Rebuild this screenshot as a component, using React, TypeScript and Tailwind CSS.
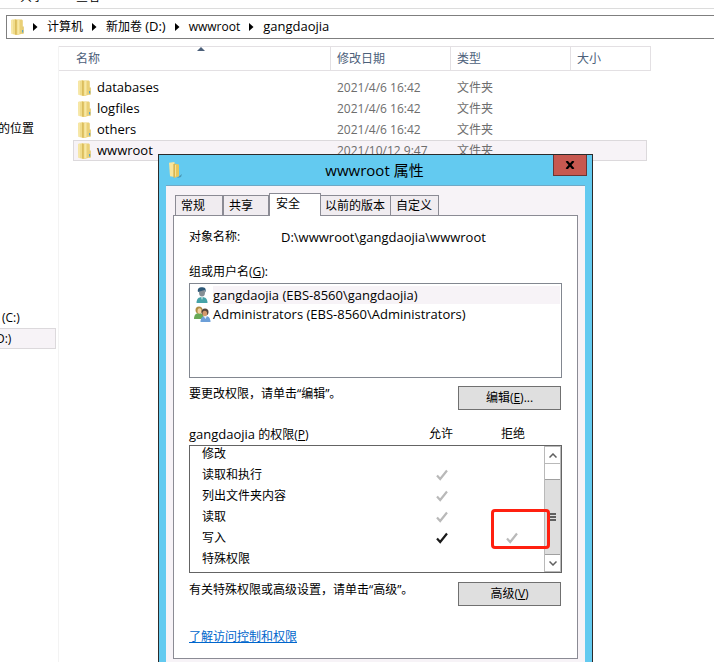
import type { ReactNode } from 'react';

const files = [
  { name: 'databases', date: '2021/4/6 16:42' },
  { name: 'logfiles', date: '2021/4/6 16:42' },
  { name: 'others', date: '2021/4/6 16:42' },
  { name: 'wwwroot', date: '2021/10/12 9:47', selected: true },
];

const permissions: { label: string; allow?: string; deny?: string }[] = [
  { label: '修改' },
  { label: '读取和执行', allow: 'text-[#b9b9b9]' },
  { label: '列出文件夹内容', allow: 'text-[#b9b9b9]' },
  { label: '读取', allow: 'text-[#b9b9b9]' },
  { label: '写入', allow: 'text-[#1a1a1a]', deny: 'text-[#b9b9b9]' },
  { label: '特殊权限' },
];

function FolderIcon() {
  return (
    <svg width="16" height="16" viewBox="0 0 16 16" className="shrink-0" aria-hidden="true">
      <path d="M1 1 6 0v16l-4.500-1.200z" fill="#f0dc8c" />
      <path d="M1 1 3 .6v14.600l-1.500-.4z" fill="#f7e7a6" />
      <path d="M5.500.500H12l.8 1v13l-5.300 1.500H5.500z" fill="#ead077" />
      <path d="M7.300 1.200 9.500.6v14.200l-2.200.9z" fill="#f8e8a4" />
      <path d="M5.200.800h1.300v14.700H5.200z" fill="#d6b755" />
      <path d="M12.300 7.500h1.500v7l-1.500.4z" fill="#e2c768" />
      <path d="M12 11h1.200v2.500H12z" fill="#5aa7c8" />
    </svg>
  );
}

function TitleFolderIcon() {
  return (
    <svg width="16" height="16" viewBox="0 0 16 16" className="shrink-0" aria-hidden="true">
      <path d="m10 15 4-3-1 3-4 1z" fill="#4a97b5" />
      <path d="M1 .8 6.500 0v15L2 14.200z" fill="#f8e59c" />
      <path d="m6 1.500 5 1v11.800L6 16z" fill="#e7c65c" />
      <path d="M6 2v13.500" stroke="#c9a545" strokeWidth="1" />
      <path d="M7.500 3v11.500" stroke="#f6e196" strokeWidth="1" />
    </svg>
  );
}

function UserIcon() {
  return (
    <svg width="16" height="16" viewBox="0 0 16 16" className="shrink-0" aria-hidden="true">
      <path d="M2.500 16c0-4 2-6 5.500-6s5.500 2 5.500 6z" fill="#46a3a8" />
      <path d="m6.500 10 1.500 3 1.500-3z" fill="#a9d6d8" />
      <ellipse cx="8" cy="5.500" rx="3" ry="4" fill="#858f95" />
      <path d="M4 5C3 1 6 0 8.500.3 12 .5 12 3 11.500 5.500L10.500 3z" fill="#2d5877" />
    </svg>
  );
}

function GroupIcon() {
  return (
    <svg width="17" height="16" viewBox="0 0 17 16" className="shrink-0" aria-hidden="true">
      <path d="M0 13c0-4 2-6 5-6s5 2 5 6z" fill="#69a956" />
      <circle cx="5" cy="4" r="3.500" fill="#b08d42" />
      <ellipse cx="5.500" cy="5" rx="2" ry="2.800" fill="#f0d0a0" />
      <path d="M6.500 16c0-4 2-6 5-6s5 2 5 6z" fill="#6c9fd8" />
      <path d="m9.500 10 2 3 1.500-3z" fill="#e7f1fb" />
      <circle cx="11" cy="6" r="3.500" fill="#54443a" />
      <ellipse cx="10.800" cy="7.500" rx="2.300" ry="2.800" fill="#d49a6c" />
    </svg>
  );
}

function Check({ className }: { className: string }) {
  return (
    <svg width="12" height="12" viewBox="0 0 12 12" className={className} role="img" aria-label="✓">
      <path d="M1 6.500 4.200 10 11 1.500" fill="none" stroke="currentColor" strokeWidth="2.200" />
    </svg>
  );
}

function CrumbArrow() {
  return (
    <svg width="5" height="8" viewBox="0 0 5 8" aria-hidden="true">
      <path d="m0 0 4.500 4L0 8z" fill="#000" />
    </svg>
  );
}

function En({ children }: { children: ReactNode }) {
  return <span className="text-[13px]">{children}</span>;
}

function Breadcrumb() {
  const crumb = 'flex items-center gap-[9px]';
  return (
    <nav className="ml-1.5 mt-1.5 flex h-6 items-center border border-r-0 border-[#7f7f7f] pl-[3px]">
      <FolderIcon />
      <ol className="ml-[7px] flex items-center gap-[9px]">
        <li className={crumb}><CrumbArrow /><a href="#computer">计算机</a></li>
        <li className={crumb}><CrumbArrow /><a href="#d">新加卷 <En>(D:)</En></a></li>
        <li className={crumb}><CrumbArrow /><a href="#wwwroot">wwwroot</a></li>
        <li className={crumb}><CrumbArrow /><a href="#gangdaojia"><En>gangdaojia</En></a></li>
      </ol>
    </nav>
  );
}

function FileList() {
  return (
    <main className="min-w-0 flex-1 border-l border-[#f3f3f3]">
      <table className="w-[592px] table-fixed border-separate border-spacing-0 text-left">
        <colgroup>
          <col className="w-[272px]" />
          <col className="w-[120px]" />
          <col className="w-[120px]" />
          <col className="w-[80px]" />
        </colgroup>
        <thead className="text-[#4c607a]">
          <tr className="h-[25px]">
            <th className="relative border-y border-r border-[#e3e0e3] pl-[17px] font-normal">
              名称
              <svg width="8" height="4" viewBox="0 0 8 4" className="absolute left-[138px] top-0" aria-hidden="true">
                <path d="M4 0 8 4H0z" fill="#4c607a" />
              </svg>
            </th>
            <th className="border-y border-r border-[#e3e0e3] pl-1.5 font-normal">修改日期</th>
            <th className="border-y border-r border-[#e3e0e3] pl-1.5 font-normal">类型</th>
            <th className="border-y border-r border-[#e3e0e3] pl-1.5 font-normal">大小</th>
          </tr>
        </thead>
      </table>
      <table className="ml-3.5 mt-1.5 w-[574px] table-fixed border-separate border-spacing-0">
        <colgroup>
          <col className="w-[258px]" />
          <col className="w-[120px]" />
          <col />
        </colgroup>
        <tbody>
          {files.map((f) => {
            const cell = f.selected ? 'border-y border-[#dcd9dc] bg-[#f7f3f7]' : '';
            return (
              <tr key={f.name} className="h-[21px] leading-[19px]">
                <td className={`p-0 ${cell} ${f.selected ? 'border-l pl-[3px]' : 'pl-1'}`}>
                  <span className="flex items-center gap-1"><FolderIcon /><En>{f.name}</En></span>
                </td>
                <td className={`p-0 pl-1.5 text-[#6d6d6d] ${cell}`}>{f.date}</td>
                <td className={`p-0 pl-1.5 text-[#6d6d6d] ${cell} ${f.selected ? 'border-r' : ''}`}>文件夹</td>
              </tr>
            );
          })}
        </tbody>
      </table>
    </main>
  );
}

function DialogButton({ children }: { children: ReactNode }) {
  return (
    <button type="button" className="mr-px h-6 w-[103px] border border-[#707070] bg-[#dfdfdf]">
      {children}
    </button>
  );
}

function Tabs() {
  const tab = 'h-5 border border-b-0 border-[#8b8b94] bg-[#f0ecf0] text-left';
  return (
    <div role="tablist" className="relative flex items-end pl-0.5">
      <button type="button" role="tab" className={`${tab} w-12 pl-[5px]`}>常规</button>
      <button type="button" role="tab" className={`${tab} w-[46px] pl-[5px]`}>共享</button>
      <button type="button" role="tab" aria-selected="true" className="-mb-px h-[23px] w-[52px] border border-b-0 border-[#8b8b94] bg-white pb-0.5 pl-1.5 text-left">
        安全
      </button>
      <button type="button" role="tab" className={`${tab} w-[70px] border-l-0 pl-1`}>以前的版本</button>
      <button type="button" role="tab" className={`${tab} w-12 border-l-0 pl-[5px]`}>自定义</button>
    </div>
  );
}

function PermissionList() {
  return (
    <div className="flex h-32 border border-[#646464]">
      <div className="flex-1">
        <table className="mt-[-3px] w-full table-fixed">
          <colgroup>
            <col />
            <col className="w-[70px]" />
            <col className="w-12" />
          </colgroup>
          <tbody>
            {permissions.map((p) => (
              <tr key={p.label} className="h-[21px]">
                <td className="p-0 pl-3">{p.label}</td>
                <td className="p-0 pl-2.5">{p.allow && <Check className={p.allow} />}</td>
                <td className="p-0 pl-2.5">{p.deny && <Check className={p.deny} />}</td>
              </tr>
            ))}
          </tbody>
        </table>
      </div>
      <div className="flex w-[17px] flex-col border border-[#b9b9b9] bg-white">
        <button type="button" aria-label="▲" className="flex h-4 items-center justify-center">
          <svg width="8" height="5" viewBox="0 0 8 5"><path d="M.5 4.500 4 1l3.500 3.500" fill="none" stroke="#606060" strokeWidth="1.500" /></svg>
        </button>
        <div className="h-4 border-t border-[#b9b9b9]" />
        <div className="flex flex-1 items-center justify-center border-y border-[#a0a0a0] bg-[#dedede]">
          <svg width="7" height="8" viewBox="0 0 7 8"><path d="M0 1h7M0 4h7M0 7h7" stroke="#606060" strokeWidth="2" /></svg>
        </div>
        <button type="button" aria-label="▼" className="flex h-4 items-center justify-center">
          <svg width="8" height="5" viewBox="0 0 8 5"><path d="M.5.500 4 4 7.500.500" fill="none" stroke="#606060" strokeWidth="1.500" /></svg>
        </button>
      </div>
    </div>
  );
}

function PropertiesDialog() {
  return (
    <section role="dialog" aria-labelledby="dialog-title" className="absolute left-[158px] top-[154px] w-[435px] border border-b-0 border-[#2b2b2b] bg-[#63caf0] px-[7px]">
      <header className="relative flex h-[30px] items-center">
        <span className="ml-0.5"><TitleFolderIcon /></span>
        <h1 id="dialog-title" className="flex-1 pr-5 text-center text-[15px]">wwwroot 属性</h1>
        <button type="button" aria-label="关闭" className="absolute -right-0.5 top-0 flex h-[21px] w-[34px] items-center justify-center border border-t-0 border-[#6a3535] bg-[#c75850]">
          <svg width="10" height="8" viewBox="0 0 10 8"><path d="m1.500 0 7 8M8.500 0l-7 8" stroke="#000" strokeWidth="2.200" /></svg>
        </button>
      </header>
      <div className="border-t border-[#70a9c6] bg-[#f7f3f7] px-[7px] pb-4 pt-[7px]">
        <Tabs />
        <div className="border border-[#8b8b94] bg-white px-[15px] pb-3 leading-[18px]">
          <dl className="flex pt-3">
            <dt className="w-[92px]">对象名称:</dt>
            <dd><En>D:\wwwroot\gangdaojia\wwwroot</En></dd>
          </dl>
          <h2 className="mt-4">组或用户名(<u>G</u>):</h2>
          <ul className="mt-0.5 h-[95px] border border-[#828790] p-px pl-1 text-[13px]">
            <li className="flex h-[19px] items-center gap-[3px]"><UserIcon /><span className="flex-1 bg-[#f7f3f7]">gangdaojia (EBS-8560\gangdaojia)</span></li>
            <li className="flex h-[19px] items-center gap-0.5"><GroupIcon />Administrators (EBS-8560\Administrators)</li>
          </ul>
          <div className="mt-2 flex items-start justify-between">
            <p className="leading-4">要更改权限，请单击“编辑”。</p>
            <DialogButton>编辑(<u>E</u>)...</DialogButton>
          </div>
          <div className="mt-[15px] flex">
            <h2 className="flex-1"><En>gangdaojia</En> 的权限(<u>P</u>)</h2>
            <span className="w-[72px]">允许</span>
            <span className="w-[61px]">拒绝</span>
          </div>
          <div className="relative mt-px">
            <PermissionList />
            <div className="absolute left-[302px] top-16 h-10 w-[59px] rounded-sm border-3 border-[#ff2010]" />
          </div>
          <div className="mt-[9px] flex items-start justify-between">
            <p className="leading-4">有关特殊权限或高级设置，请单击“高级”。</p>
            <DialogButton>高级(<u>V</u>)</DialogButton>
          </div>
          <a href="#help" className="mt-[22px] inline-block text-[#0066cc] underline">了解访问控制和权限</a>
        </div>
      </div>
    </section>
  );
}

export default function App() {
  return (
    <div className="relative h-screen overflow-hidden bg-white font-['Open_Sans','Noto_Sans_CJK_SC',sans-serif] text-xs text-black">
      <div className="flex h-[9px] items-end gap-8 border-b border-[#dcdcdc] pb-[3px] pl-5">
        <span>共享</span>
        <span>查看</span>
      </div>
      <Breadcrumb />
      <div className="mt-[7px] flex h-full">
        <aside className="w-[58px] shrink-0 overflow-hidden whitespace-nowrap">
          <p className="mt-[75px] -ml-0.5">的位置</p>
          <p className="mt-[173px] pl-0.5">(C:)</p>
          <p className="mr-0.5 mt-0.5 h-[21px] border border-l-0 border-[#dcd9dc] bg-[#f7f3f7] leading-5">
            <span className="-ml-1">D:)</span>
          </p>
        </aside>
        <FileList />
      </div>
      <PropertiesDialog />
    </div>
  );
}
